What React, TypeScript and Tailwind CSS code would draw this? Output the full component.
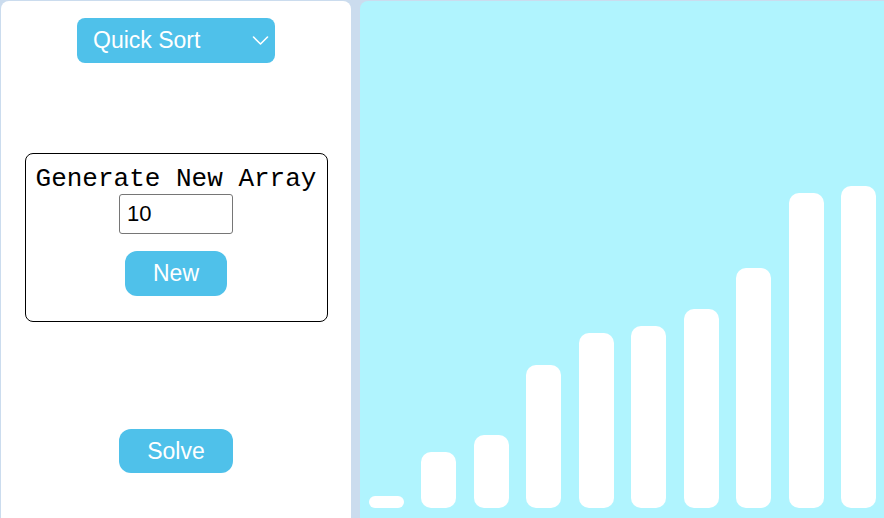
const bars = [12, 56, 73, 143, 175, 182, 199, 240, 315, 322];

function Chevron() {
  return (
    <svg width="17" height="17" viewBox="0 0 17 17" fill="none" stroke="white" strokeWidth="1.6" strokeLinecap="round" strokeLinejoin="round">
      <path d="M1.5 5 8.5 12l7-7" />
    </svg>
  );
}

export default function App() {
  return (
    <div className="flex h-[518px] gap-[9px] overflow-hidden bg-[#cbdcee] pl-[1px] pt-[1px] font-['Liberation_Sans',Arial,sans-serif]">
      <aside className="flex w-[350px] shrink-0 flex-col items-center rounded-t-lg bg-white">
        <div className="relative mt-[17px]">
          <select
            defaultValue="quick"
            className="h-[45px] w-[198px] appearance-none rounded-lg bg-[#4fc1ea] pl-4 text-[23px] text-white outline-none"
          >
            <option value="quick">Quick Sort</option>
            <option value="merge">Merge Sort</option>
            <option value="bubble">Bubble Sort</option>
          </select>
          <span className="pointer-events-none absolute right-[6px] top-[14px]">
            <Chevron />
          </span>
        </div>

        <div className="mt-[90px] flex h-[169px] w-[303px] flex-col items-center rounded-lg border border-black">
          <p className="mt-[10px] font-['Liberation_Mono','Courier_New',monospace] text-[26px] leading-[30px] text-black">
            Generate New Array
          </p>
          <input
            defaultValue="10"
            className="h-[40px] w-[114px] rounded-[3px] border border-[#767676] px-[7px] text-[22px] text-black outline-none"
          />
          <button className="mt-[17px] h-[45px] w-[102px] rounded-xl bg-[#4fc1ea] text-[23px] text-white">
            New
          </button>
        </div>

        <button className="mt-[107px] h-[44px] w-[114px] rounded-xl bg-[#4fc1ea] text-[23px] text-white">
          Solve
        </button>
      </aside>

      <main className="flex flex-1 items-end justify-between rounded-tl-lg bg-[#b0f4fe] pb-[10px] pl-[9px] pr-[8px]">
        {bars.map((h, i) => (
          <div key={i} className="w-[35px] rounded-[10px] bg-white" style={{ height: h }} />
        ))}
      </main>
    </div>
  );
}
